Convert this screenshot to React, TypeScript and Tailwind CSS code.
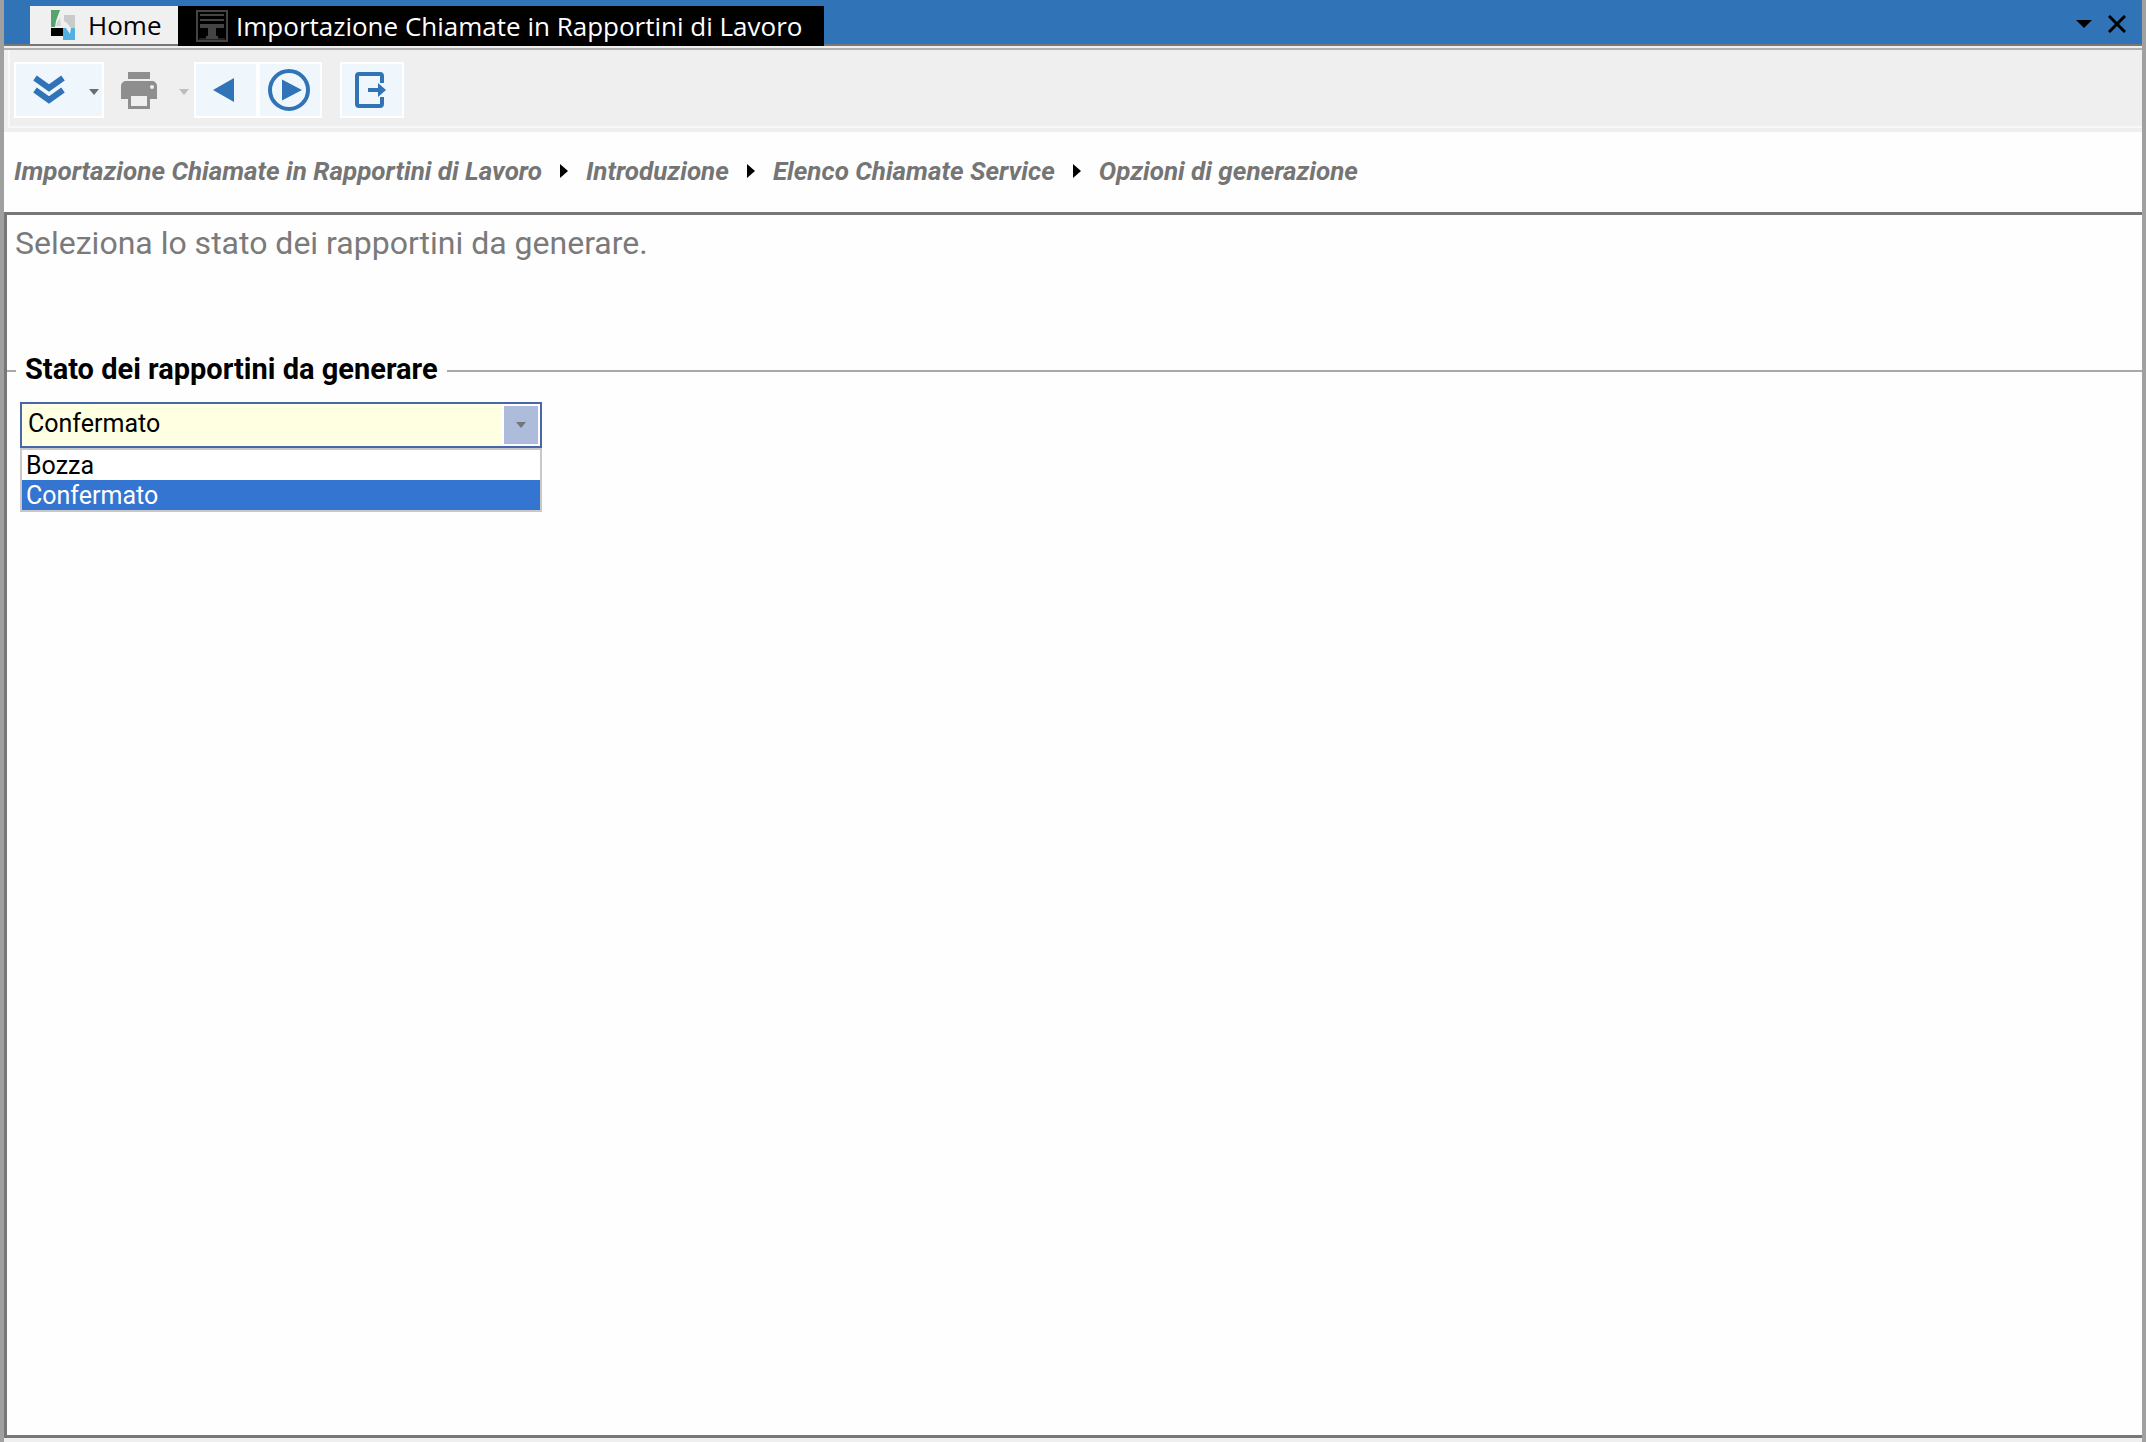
import React, { useState } from "react";

const crumbs = [
  "Importazione Chiamate in Rapportini di Lavoro",
  "Introduzione",
  "Elenco Chiamate Service",
  "Opzioni di generazione",
];

const states = ["Bozza", "Confermato"];

function HomeIcon() {
  return (
    <svg width="26" height="32" viewBox="0 0 26 32">
      <path d="M1 1h9L6 12l-1 6H1z" fill="#56a56e" />
      <path d="M14 6h11v13h-4l-4-5-3-2z" fill="#c9caca" />
      <path d="M7 13l3-4 1 8H6z" fill="#cfd8d2" />
      <path d="M1 19h12v8H1z" fill="#000" />
      <path d="M13 19h3l4 6 1-6h4v12H13z" fill="#52b1e2" />
    </svg>
  );
}

function FormIcon() {
  return (
    <svg width="32" height="32" viewBox="0 0 32 32" fill="none" stroke="#444444" strokeWidth="2">
      <path d="M1 1h30v30H1z" />
      <path d="M4 5h24M4 10h24" />
      <path d="M4 14h24v4h-8v8h2v3h-12v-3h2v-8H4z" fill="#444444" stroke="none" />
      <path d="M3 29h26" strokeWidth="1" />
    </svg>
  );
}

function Caret({ className }: { className: string }) {
  return (
    <svg width="10" height="6" viewBox="0 0 10 6" className={className}>
      <path d="M0 0h10L5 6z" fill="currentColor" />
    </svg>
  );
}

function TitleBar() {
  return (
    <header className="flex h-[46px] items-end bg-[#3173b7] border-b-2 border-[#777777] pl-[26px]">
      <button className="flex h-[38px] w-[148px] items-center gap-3 bg-[#f0f0f0] pl-5 text-black">
        <HomeIcon />
        <span>Home</span>
      </button>
      <button className="-mb-0.5 flex h-10 items-center gap-2 bg-black pl-[18px] pr-[22px] text-white">
        <FormIcon />
        <span>Importazione Chiamate in Rapportini di Lavoro</span>
      </button>
      <div className="ml-auto flex h-full items-center gap-4 pr-4 pt-1">
        <button aria-label="Elenco schede">
          <svg width="16" height="8" viewBox="0 0 16 8">
            <path d="M0 0h16L8 8z" fill="#000" />
          </svg>
        </button>
        <button aria-label="Chiudi">
          <svg width="18" height="18" viewBox="0 0 18 18" stroke="#000" strokeWidth="3">
            <path d="M1 1l16 16M17 1L1 17" />
          </svg>
        </button>
      </div>
    </header>
  );
}

function Toolbar() {
  return (
    <div className="border-b-4 border-[#efefef]">
      <div className="ml-1 flex h-[78px] items-center border-b-2 border-l-2 border-[#f8f8f8] bg-[#efefef] pl-1 pt-1">
        <button aria-label="Espandi" className="flex h-14 w-[90px] items-center border-2 border-white bg-[#eff7fd] pl-[17px] text-[#3173b7]">
          <svg width="32" height="30" viewBox="0 0 32 30" fill="none" stroke="currentColor" strokeWidth="6">
            <path d="M2 3l14 10L30 3M2 15l14 10L30 15" />
          </svg>
          <Caret className="ml-6 mt-1 text-[#6d6d6d]" />
        </button>
        <button aria-label="Stampa" disabled className="flex h-14 w-[90px] items-center pl-[17px] text-[#8e8e8e]">
          <svg width="36" height="37" viewBox="0 0 36 37" fill="currentColor">
            <path d="M7 0h22v7H7z" />
            <path fillRule="evenodd" d="M5 9h26a5 5 0 0 1 5 5v13h-7v10H7V27H0V14a5 5 0 0 1 5-5zm5 15v10h16V24zM31 13a2 2 0 1 0 0 4 2 2 0 0 0 0-4z" />
          </svg>
          <Caret className="ml-[22px] mt-1 text-[#bdbdbd]" />
        </button>
        <button aria-label="Indietro" className="flex h-14 w-16 items-center border-2 border-white bg-[#eff7fd] pl-4">
          <svg width="24" height="26" viewBox="0 0 24 26">
            <path d="M22 1v24L1 13z" fill="#3173b7" />
          </svg>
        </button>
        <button aria-label="Avanti" className="flex h-14 w-16 items-center border-2 border-white bg-[#eff7fd] pl-2">
          <svg width="42" height="42" viewBox="0 0 42 42">
            <circle cx="21" cy="21" r="19" fill="none" stroke="#3173b7" strokeWidth="4" />
            <path d="M14 10.500v21L34 21z" fill="#3173b7" />
          </svg>
        </button>
        <button aria-label="Esci" className="ml-[18px] flex h-14 w-16 items-center border-2 border-white bg-[#eff7fd] pl-3">
          <svg width="32" height="38" viewBox="0 0 32 38" fill="none" stroke="#3173b7" strokeWidth="4">
            <path d="M28 12V5a2 2 0 0 0-2-2H5a2 2 0 0 0-2 2v28a2 2 0 0 0 2 2h21a2 2 0 0 0 2-2v-7" />
            <path d="M14 19h12" />
            <path d="M24 12l8 7-8 7z" fill="#3173b7" stroke="none" />
          </svg>
        </button>
      </div>
    </div>
  );
}

export default function App() {
  const [value, setValue] = useState("Confermato");

  return (
    <div className="flex h-screen flex-col border-x-4 border-[#a0a0a0] bg-[#efefef] font-['Roboto',sans-serif]">
      <div className="font-['Open_Sans',sans-serif] text-[26px] leading-8">
        <TitleBar />
      </div>
      <div className="mt-0.5 border-t-2 border-[#b0b0b0]">
        <Toolbar />
      </div>

      <nav className="flex h-20 items-center gap-[18px] bg-[#fefefe] pb-0.5 pl-2.5 text-[26px] font-bold italic leading-8 text-[#757575]">
        {crumbs.map((el, index) => (
          <React.Fragment key={index}>
            {index > 0 && (
              <svg width="8" height="14" viewBox="0 0 8 14">
                <path d="M0 0l8 7-8 7z" fill="#000" />
              </svg>
            )}
            <a href="#">{el}</a>
          </React.Fragment>
        ))}
      </nav>

      <main className="mb-1 flex-1 border-y-[3px] border-l-[3px] border-[#777777] bg-[#fefefe]">
        <p className="pl-2 pt-2.5 text-[32px] leading-9 text-[#7a7a7a]">
          Seleziona lo stato dei rapportini da generare.
        </p>

        <fieldset className="mt-[92px] border-t-2 border-[#a8a8a8] pl-[13px]">
          <legend className="-ml-1 px-[9px] pb-1 text-[29px] font-bold leading-8 text-black">
            Stato dei rapportini da generare
          </legend>
          <div className="mt-[13px] w-[522px] text-[25px] text-black">
            <div className="relative">
              <select
                aria-label="Stato dei rapportini da generare"
                value={value}
                onChange={(e) => setValue(e.target.value)}
                className="block h-[46px] w-full appearance-none border-2 border-[#4767a8] bg-[#ffffe1] pb-0.5 pl-1.5 leading-8 outline-none"
              >
                {states.map((el) => (
                  <option key={el}>{el}</option>
                ))}
              </select>
              <span className="pointer-events-none absolute inset-y-0.5 right-0.5 flex w-[38px] items-center justify-center border-2 border-white bg-[#aebcdc]">
                <Caret className="text-[#757575]" />
              </span>
            </div>
            <ul role="listbox" aria-label="Valori" className="border-2 border-[#c8c8c8] bg-white">
              {states.map((el) => (
                <li
                  key={el}
                  role="option"
                  aria-selected={el === value}
                  onClick={() => setValue(el)}
                  className={`h-[30px] pl-1 leading-8 ${el === value ? "bg-[#3375d0] text-white" : "text-black"}`}
                >
                  {el}
                </li>
              ))}
            </ul>
          </div>
        </fieldset>
      </main>
    </div>
  );
}
